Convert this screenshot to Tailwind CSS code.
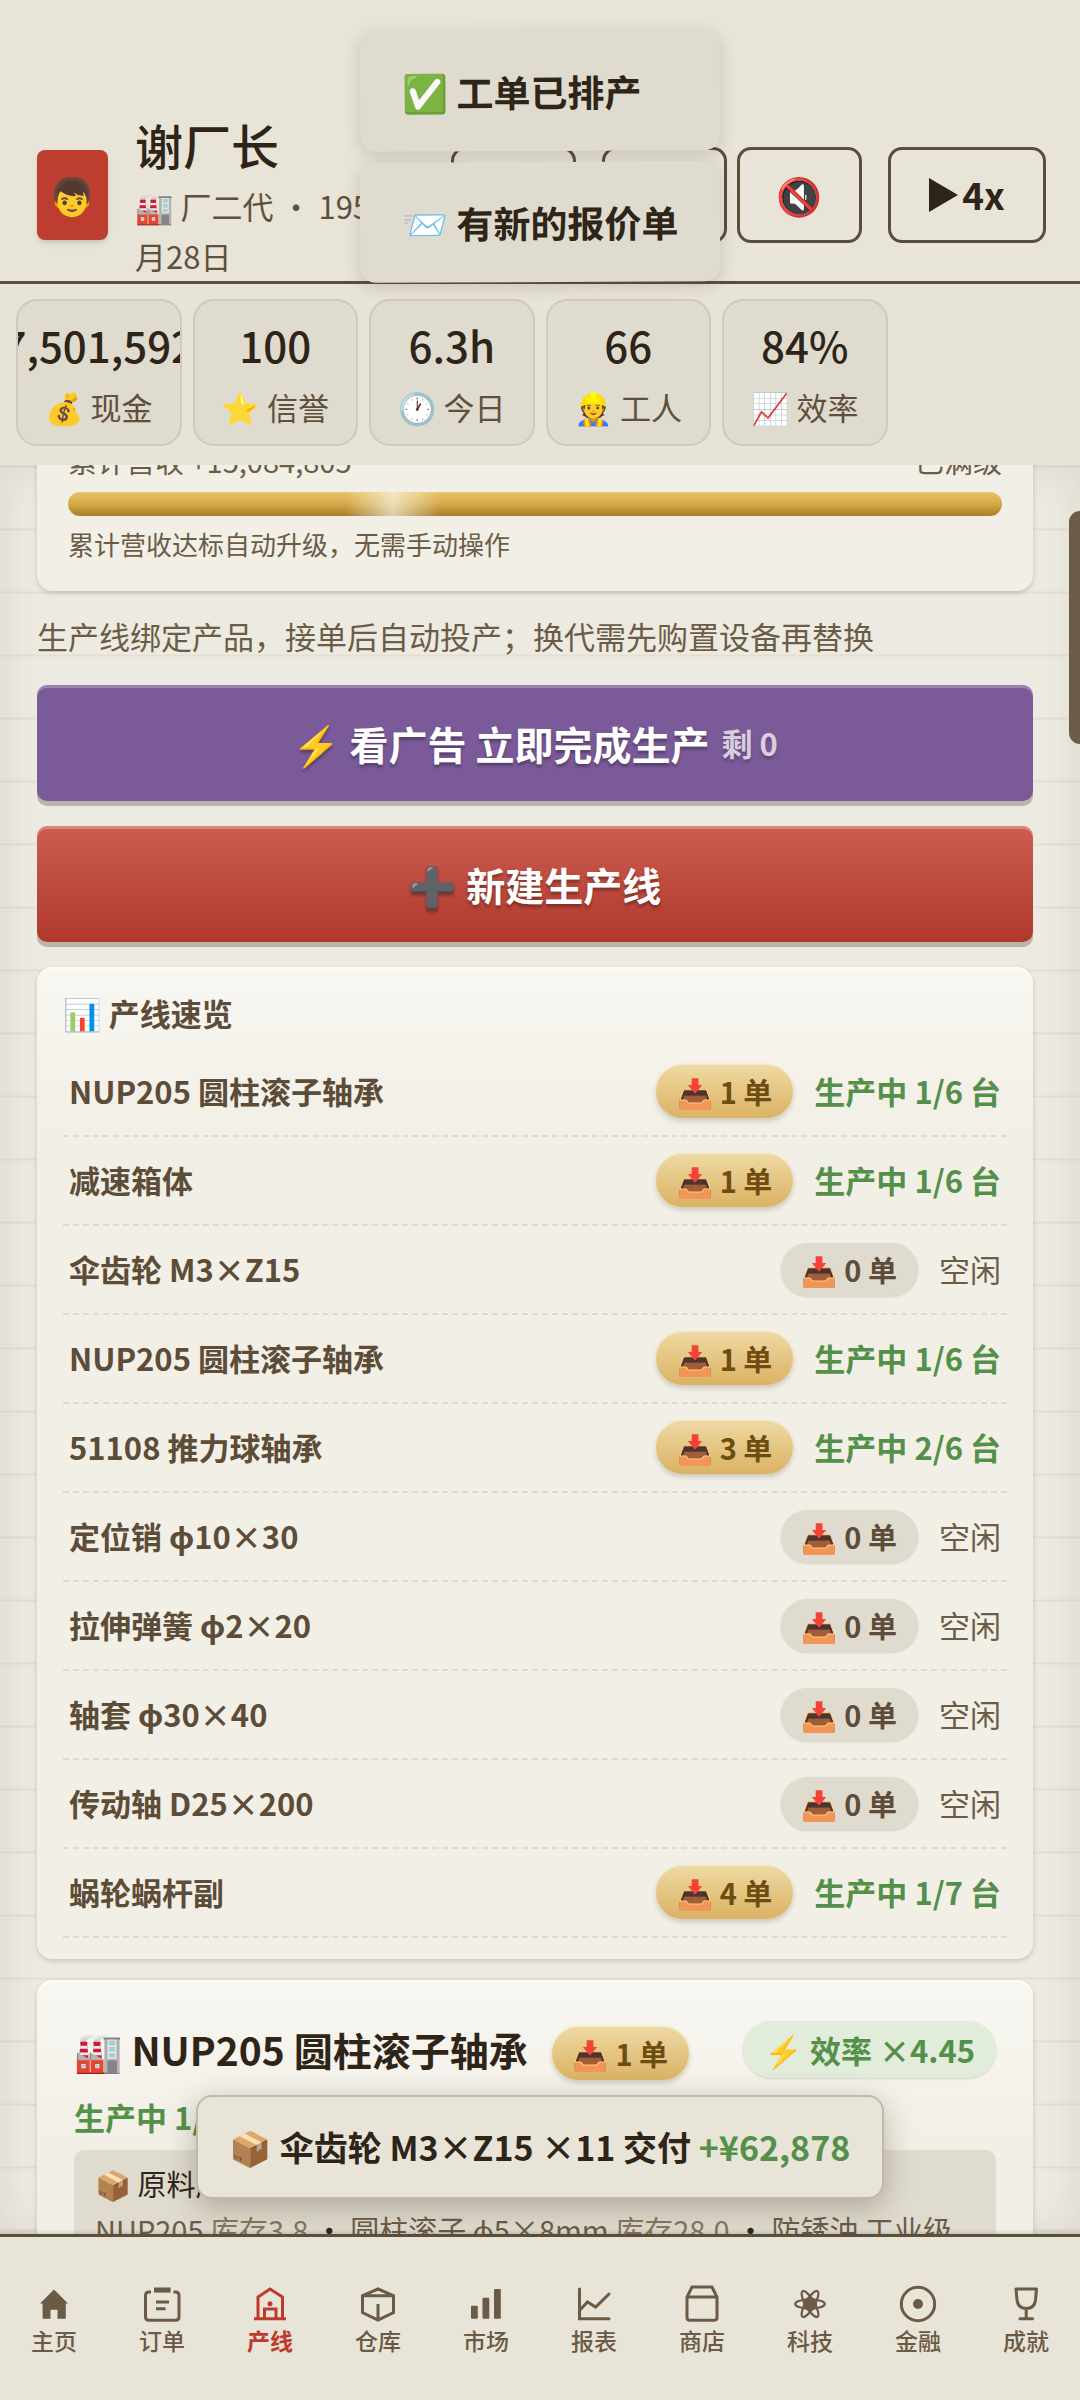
<!DOCTYPE html>
<html lang="zh-CN">
<head>
    <meta charset="UTF-8">
    <meta name="viewport" content="width=device-width, initial-scale=1.0">
    <title>谢厂长 - 产线</title>
    <script src="https://cdn.jsdelivr.net/npm/@tailwindcss/browser@4"></script>
    <style>
        body {
            font-family: 'Noto Sans CJK SC', 'Noto Color Emoji', sans-serif;
        }
        /* Ruled paper behind the cards */
        .paper {
            background-color: #edeae1;
            background-image: repeating-linear-gradient(to bottom, transparent 0, #e3dfd5 1px, #e3dfd5 2px, transparent 3px, transparent 63px);
            box-shadow: inset 0 0 40px rgba(90, 77, 58, 0.12);
        }
        .card {
            background: linear-gradient(to bottom, #f8f7f2 0, #f2efe6 160px);
            box-shadow: inset 0 2px 0 #fdfcf9, 0 2px 5px rgba(60, 45, 25, 0.2);
        }
        .pill-gold {
            background: linear-gradient(to bottom, #eed9a3, #dbb263);
            box-shadow: 0 -1px 2px #f6e6bd, 0 3px 5px rgba(60, 45, 25, 0.2);
        }
        .nav-icon {
            width: 36px;
            height: 36px;
            overflow: visible;
            fill: none;
            stroke: currentColor;
            stroke-width: 3;
        }
        /* Diameter sign with a looped phi */
        .phi {
            font-family: 'Noto Sans', sans-serif;
        }
    </style>
</head>
<body class="relative flex flex-col h-screen overflow-hidden bg-[#e8e4d8] text-[#2e2418]">

    <!-- Top bar -->
    <header class="flex items-center pt-[108px] pl-[37px] pr-[34px] border-b-3 border-[#5a4f3a] bg-[#e8e4d8]">
        <div class="flex items-center justify-center shrink-0 w-[71px] h-[90px] rounded-lg bg-[#bd3e2f] text-[37px] shadow-md">👦</div>
        <div class="flex-1 min-w-0 pl-[27px]">
            <h1 class="text-[48px] leading-[73px] font-medium">谢厂长</h1>
            <p class="text-[31px] leading-[50px] text-[#5f503c]">🏭 厂二代 • 1955年2月28日</p>
        </div>
        <div class="flex items-center shrink-0 text-[37px] font-bold">
            <button class="w-[125px] h-[96px] mr-[26px] rounded-[14px] border-3 border-[#5a4d3a]">💾</button>
            <button class="w-[125px] h-[96px] mr-[10px] rounded-[14px] border-3 border-[#5a4d3a]">📖</button>
            <button class="w-[125px] h-[96px] mr-[26px] rounded-[14px] border-3 border-[#5a4d3a]">🔇</button>
            <button class="flex items-center justify-center gap-1 w-[158px] h-[96px] rounded-[14px] border-3 border-[#5a4d3a]">
                <svg class="w-[29px] h-[34px] fill-current" viewBox="0 0 29 34"><path d="M0 0L29 17L0 34Z"/></svg>
                <span>4x</span>
            </button>
        </div>
    </header>

    <!-- Stats -->
    <section class="grid grid-cols-6 gap-[11px] px-4 pt-[15px] pb-[19px] bg-[#e8e3d7]">
        <div class="flex flex-col items-center overflow-hidden h-[147px] pt-[14px] rounded-[21px] border-2 border-[#d0c9bc] bg-[#dfdbce]">
            <strong class="text-[42px] leading-[60px] font-medium">7,501,592</strong>
            <span class="text-[31px] leading-[64px] text-[#5f503c] whitespace-nowrap">💰 现金</span>
        </div>
        <div class="flex flex-col items-center overflow-hidden h-[147px] pt-[14px] rounded-[21px] border-2 border-[#d0c9bc] bg-[#dfdbce]">
            <strong class="text-[42px] leading-[60px] font-medium">100</strong>
            <span class="text-[31px] leading-[64px] text-[#5f503c] whitespace-nowrap">⭐ 信誉</span>
        </div>
        <div class="flex flex-col items-center overflow-hidden h-[147px] pt-[14px] rounded-[21px] border-2 border-[#d0c9bc] bg-[#dfdbce]">
            <strong class="text-[42px] leading-[60px] font-medium">6.3h</strong>
            <span class="text-[31px] leading-[64px] text-[#5f503c] whitespace-nowrap">🕐 今日</span>
        </div>
        <div class="flex flex-col items-center overflow-hidden h-[147px] pt-[14px] rounded-[21px] border-2 border-[#d0c9bc] bg-[#dfdbce]">
            <strong class="text-[42px] leading-[60px] font-medium">66</strong>
            <span class="text-[31px] leading-[64px] text-[#5f503c] whitespace-nowrap">👷 工人</span>
        </div>
        <div class="flex flex-col items-center overflow-hidden h-[147px] pt-[14px] rounded-[21px] border-2 border-[#d0c9bc] bg-[#dfdbce]">
            <strong class="text-[42px] leading-[60px] font-medium">84%</strong>
            <span class="text-[31px] leading-[64px] text-[#5f503c] whitespace-nowrap">📈 效率</span>
        </div>
    </section>

    <!-- Scrolled content -->
    <main class="paper relative flex-1 min-h-0 overflow-hidden pl-[37px] pr-[47px]">
        <section class="-mt-10 px-[31px] pt-5 pb-[26px] rounded-[16px] bg-[#f2efe6] shadow-[0_2px_5px_rgba(60,45,25,0.2)]">
            <div class="flex justify-between text-[29px] leading-[30px] text-[#6b5c47]">
                <span>累计营收 +15,084,805</span>
                <span>已满级</span>
            </div>
            <div class="h-[24px] mt-[17px] rounded-full overflow-hidden bg-linear-to-b from-[#e5c467] via-[#d4a946] to-[#a87d2c]">
                <div class="w-[96px] h-full ml-[277px] bg-linear-to-r from-white/0 via-white/60 to-white/0"></div>
            </div>
            <p class="mt-[7px] text-[26px] leading-[42px] text-[#6b5c47]">累计营收达标自动升级，无需手动操作</p>
        </section>

        <p class="pt-[20px] pb-[24px] text-[31px] leading-[50px] text-[#6b5c47]">生产线绑定产品，接单后自动投产；换代需先购置设备再替换</p>

        <button class="flex items-center justify-center gap-3 w-full h-[116px] rounded-[10px] bg-[#7b5a99] text-white text-[39px] font-bold text-shadow-[0_3px_3px_rgba(0,0,0,0.3)] shadow-[inset_0_3px_0_rgba(255,255,255,0.25),0_5px_0_#bab4aa]">
            <span>⚡ 看广告 立即完成生产</span>
            <span class="text-[31px] opacity-70">剩 0</span>
        </button>
        <button class="w-full h-[116px] mt-[25px] rounded-[10px] bg-linear-to-b from-[#cc5c50] to-[#af382b] text-white text-[39px] font-bold text-shadow-[0_3px_3px_rgba(0,0,0,0.3)] shadow-[inset_0_3px_0_rgba(255,255,255,0.25),0_5px_0_#bab4aa]">➕ 新建生产线</button>

        <!-- Line overview -->
        <section class="card mt-[25px] px-[26px] py-[21px] rounded-[16px] text-[#5c4c38]">
            <h2 class="mb-[10px] text-[31px] leading-[50px] font-bold">📊 产线速览</h2>
            <ul class="text-[31px] font-bold">
                <li class="flex items-center h-[89px] px-[6px] border-b-2 border-dashed border-[#dedacd]">
                    <span class="flex-1">NUP205 圆柱滚子轴承</span>
                    <span class="pill-gold px-[21px] leading-[53px] rounded-full text-[29px] text-[#6f4c12]">📥 1 单</span>
                    <span class="ml-[21px] text-[#55904a]">生产中 1/6 台</span>
                </li>
                <li class="flex items-center h-[89px] px-[6px] border-b-2 border-dashed border-[#dedacd]">
                    <span class="flex-1">减速箱体</span>
                    <span class="pill-gold px-[21px] leading-[53px] rounded-full text-[29px] text-[#6f4c12]">📥 1 单</span>
                    <span class="ml-[21px] text-[#55904a]">生产中 1/6 台</span>
                </li>
                <li class="flex items-center h-[89px] px-[6px] border-b-2 border-dashed border-[#dedacd]">
                    <span class="flex-1">伞齿轮 M3×Z15</span>
                    <span class="px-[21px] leading-[53px] rounded-full bg-[#dfdbce] text-[29px] shadow-sm">📥 0 单</span>
                    <span class="ml-[21px] text-[#6b5c47] font-normal">空闲</span>
                </li>
                <li class="flex items-center h-[89px] px-[6px] border-b-2 border-dashed border-[#dedacd]">
                    <span class="flex-1">NUP205 圆柱滚子轴承</span>
                    <span class="pill-gold px-[21px] leading-[53px] rounded-full text-[29px] text-[#6f4c12]">📥 1 单</span>
                    <span class="ml-[21px] text-[#55904a]">生产中 1/6 台</span>
                </li>
                <li class="flex items-center h-[89px] px-[6px] border-b-2 border-dashed border-[#dedacd]">
                    <span class="flex-1">51108 推力球轴承</span>
                    <span class="pill-gold px-[21px] leading-[53px] rounded-full text-[29px] text-[#6f4c12]">📥 3 单</span>
                    <span class="ml-[21px] text-[#55904a]">生产中 2/6 台</span>
                </li>
                <li class="flex items-center h-[89px] px-[6px] border-b-2 border-dashed border-[#dedacd]">
                    <span class="flex-1">定位销 <span class="phi">φ</span>10×30</span>
                    <span class="px-[21px] leading-[53px] rounded-full bg-[#dfdbce] text-[29px] shadow-sm">📥 0 单</span>
                    <span class="ml-[21px] text-[#6b5c47] font-normal">空闲</span>
                </li>
                <li class="flex items-center h-[89px] px-[6px] border-b-2 border-dashed border-[#dedacd]">
                    <span class="flex-1">拉伸弹簧 <span class="phi">φ</span>2×20</span>
                    <span class="px-[21px] leading-[53px] rounded-full bg-[#dfdbce] text-[29px] shadow-sm">📥 0 单</span>
                    <span class="ml-[21px] text-[#6b5c47] font-normal">空闲</span>
                </li>
                <li class="flex items-center h-[89px] px-[6px] border-b-2 border-dashed border-[#dedacd]">
                    <span class="flex-1">轴套 <span class="phi">φ</span>30×40</span>
                    <span class="px-[21px] leading-[53px] rounded-full bg-[#dfdbce] text-[29px] shadow-sm">📥 0 单</span>
                    <span class="ml-[21px] text-[#6b5c47] font-normal">空闲</span>
                </li>
                <li class="flex items-center h-[89px] px-[6px] border-b-2 border-dashed border-[#dedacd]">
                    <span class="flex-1">传动轴 D25×200</span>
                    <span class="px-[21px] leading-[53px] rounded-full bg-[#dfdbce] text-[29px] shadow-sm">📥 0 单</span>
                    <span class="ml-[21px] text-[#6b5c47] font-normal">空闲</span>
                </li>
                <li class="flex items-center h-[89px] px-[6px] border-b-2 border-dashed border-[#dedacd]">
                    <span class="flex-1">蜗轮蜗杆副</span>
                    <span class="pill-gold px-[21px] leading-[53px] rounded-full text-[29px] text-[#6f4c12]">📥 4 单</span>
                    <span class="ml-[21px] text-[#55904a]">生产中 1/7 台</span>
                </li>
            </ul>
        </section>

        <!-- Line detail -->
        <section class="card mt-[21px] p-[37px] rounded-[16px]">
            <div class="flex items-center h-[64px]">
                <h2 class="text-[39px] font-bold">🏭 NUP205 圆柱滚子轴承</h2>
                <span class="pill-gold mt-2 ml-6 px-[21px] leading-[53px] rounded-full text-[29px] font-bold text-[#6f4c12]">📥 1 单</span>
                <span class="ml-auto px-[21px] leading-[57px] rounded-full bg-[#e1ecdb] text-[31px] font-bold text-[#55904a] shadow-sm">⚡ 效率 ×4.45</span>
            </div>
            <p class="mt-[11px] text-[31px] leading-[50px] font-bold text-[#55904a]">生产中 1/6 台</p>
            <div class="mt-2 px-[21px] py-[10px] rounded-[10px] bg-[#dfdbce] text-[29px] leading-[46px]">
                <p>📦 原料库存</p>
                <p class="text-[#6b5c47]">NUP205 <span class="text-[#86765e]">库存3.8</span> <span class="text-[#2e2418]">•</span> 圆柱滚子 <span class="phi">φ</span>5×8mm <span class="text-[#86765e]">库存28.0</span> <span class="text-[#2e2418]">•</span> 防锈油 工业级</p>
            </div>
        </section>

        <!-- Scroll thumb -->
        <div class="absolute top-[46px] right-0 w-[11px] h-[233px] rounded-l-full rounded-r-md bg-[#6b5c47]"></div>
    </main>

    <!-- Tab bar -->
    <nav class="relative grid grid-cols-10 pt-[49px] pb-[44px] border-t-3 border-[#5a4f3a] bg-[#e8e4d8] text-[23px] leading-[32px] font-medium text-[#6b5a45] shadow-[0_-2px_3px_rgba(60,45,25,0.15)]">
        <a href="#" class="flex flex-col items-center gap-[2px]">
            <svg class="nav-icon" viewBox="0 0 36 36"><path fill="currentColor" stroke="none" d="M18 3.5L32 17.5H29.8V32.7H21.5V23.7H14.5V32.7H6.6V17.5H4Z"/></svg>
            <span>主页</span>
        </a>
        <a href="#" class="flex flex-col items-center gap-[2px]">
            <svg class="nav-icon" viewBox="0 0 36 36"><path d="M7 6H5Q1.5 6 1.5 9.5V31Q1.5 34.3 5 34.3H31.5Q35 34.3 35 31V9.5Q35 6 31.5 6H29.5M12 16H25M12 22.7H21.5"/><path fill="currentColor" stroke="none" d="M10 1.5H26.6V6.6H10Z"/></svg>
            <span>订单</span>
        </a>
        <a href="#" class="flex flex-col items-center gap-[2px] text-[#bd3a2c] font-bold">
            <svg class="nav-icon" viewBox="0 0 36 36"><path d="M2 32.7H34M6 32.7V11L18 3L30.5 11V32.7M12.5 32.7V23H24V32.7"/><circle cx="18" cy="17.7" r="2.5" fill="currentColor" stroke="none"/></svg>
            <span>产线</span>
        </a>
        <a href="#" class="flex flex-col items-center gap-[2px]">
            <svg class="nav-icon" viewBox="0 0 36 36"><path d="M18 3L33.5 9.7V26.5L18 34L2.5 26.5V9.7ZM2.5 9.7H33.5M18 18V34"/></svg>
            <span>仓库</span>
        </a>
        <a href="#" class="flex flex-col items-center gap-[2px]">
            <svg class="nav-icon" viewBox="0 0 36 36"><g fill="currentColor" stroke="none"><rect x="3" y="19.7" width="6.8" height="13" rx="1"/><rect x="14.5" y="11.7" width="6.8" height="21" rx="1"/><rect x="26" y="3" width="6.8" height="29.7" rx="1"/></g></svg>
            <span>市场</span>
        </a>
        <a href="#" class="flex flex-col items-center gap-[2px]">
            <svg class="nav-icon" viewBox="0 0 36 36"><path stroke-linecap="round" d="M3.5 3V32.7H33M3.5 24.5L11.5 16L19.7 21L33 8"/></svg>
            <span>报表</span>
        </a>
        <a href="#" class="flex flex-col items-center gap-[2px]">
            <svg class="nav-icon" viewBox="0 0 36 36"><path d="M3 11L8 1H28L33 11V31.5Q33 34.3 30 34.3H6Q3 34.3 3 31.5ZM3 11H33"/></svg>
            <span>商店</span>
        </a>
        <a href="#" class="flex flex-col items-center gap-[2px]">
            <svg class="nav-icon" viewBox="0 0 36 36"><g stroke-width="2.2"><ellipse cx="18" cy="18" rx="14.8" ry="4.5"/><ellipse cx="18" cy="18" rx="14.8" ry="4.5" transform="rotate(60 18 18)"/><ellipse cx="18" cy="18" rx="14.8" ry="4.5" transform="rotate(120 18 18)"/></g><circle cx="18" cy="18" r="7" fill="currentColor" stroke="none"/></svg>
            <span>科技</span>
        </a>
        <a href="#" class="flex flex-col items-center gap-[2px]">
            <svg class="nav-icon" viewBox="0 0 36 36"><circle cx="18" cy="18" r="16.7"/><circle cx="18" cy="18" r="5" fill="currentColor" stroke="none"/></svg>
            <span>金融</span>
        </a>
        <a href="#" class="flex flex-col items-center gap-[2px]">
            <svg class="nav-icon" viewBox="0 0 36 36"><path stroke-linejoin="round" d="M8 3H28.5L27.5 14Q26.5 22.5 18.2 22.5Q10 22.5 9 14ZM18.2 22.5V32.7"/><path stroke-linecap="round" d="M12 32.7H24.5"/></svg>
            <span>成就</span>
        </a>
    </nav>

    <!-- Toasts -->
    <div class="absolute top-[31px] inset-x-0 flex flex-col items-center gap-[11px] text-[37px] font-bold whitespace-nowrap">
        <div class="w-[360px] px-[42px] leading-[120px] -rotate-[0.3deg] rounded-[16px] bg-[#dfdbce] shadow-[0_4px_16px_rgba(60,45,25,0.18)]">✅ 工单已排产</div>
        <div class="w-[360px] px-[42px] leading-[120px] -rotate-[0.3deg] rounded-[16px] bg-[#dfdbce] shadow-[0_4px_16px_rgba(60,45,25,0.18)]">📨 有新的报价单</div>
    </div>
    <div class="absolute bottom-[201px] inset-x-0 flex justify-center">
        <div class="px-8 leading-[100px] rounded-[16px] border-2 border-[#c1baa9] bg-[#e8e4d8] text-[34px] font-bold shadow-[0_8px_30px_rgba(60,45,25,0.3)]">📦 伞齿轮 M3×Z15 ×11 交付 <span class="text-[#55904a]">+¥62,878</span></div>
    </div>
</body>
</html>
